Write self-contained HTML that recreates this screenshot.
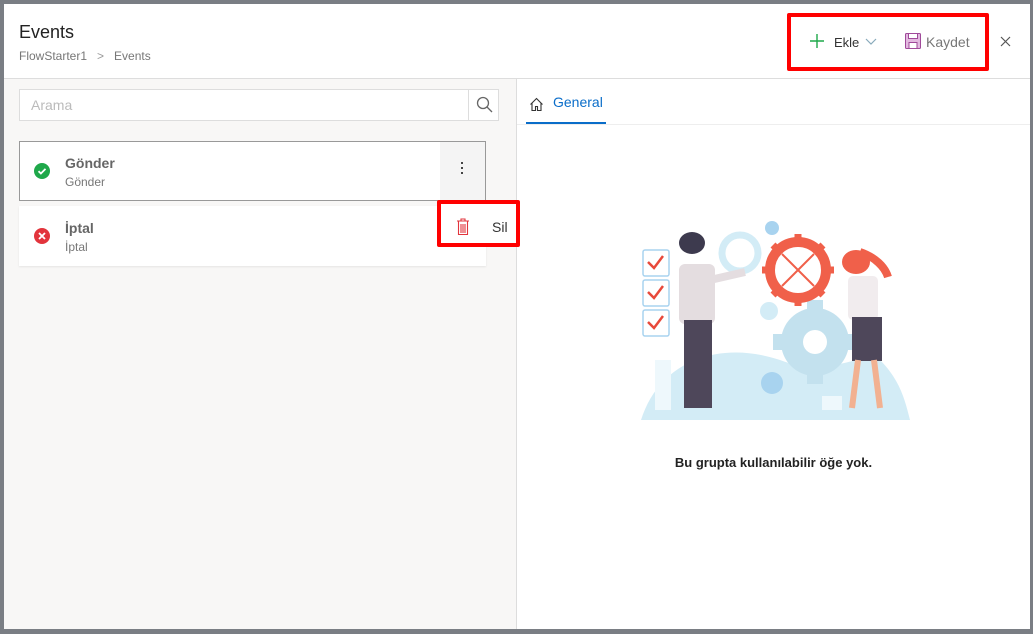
<!DOCTYPE html>
<html><head><meta charset="utf-8"><style>
body{margin:0;width:1033px;height:634px;background:#7a7e84;font-family:"Liberation Sans",sans-serif;overflow:hidden;position:relative}
.p{position:absolute;left:4px;top:4px;width:1026px;height:625px;background:#fff}
.a{position:absolute}
</style></head><body>
<div class="p">
<div class="a" style="left:15px;top:18px;font-size:18px;color:#222">Events</div>
<div class="a" style="left:15px;top:45px;font-size:12px;color:#777">FlowStarter1 &nbsp;&nbsp;<span style="color:#999">&gt;</span>&nbsp;&nbsp; Events</div>
<div class="a" style="left:0;top:74px;width:1026px;height:1px;background:#ddd"></div>
<div class="a" style="left:0;top:75px;width:512px;height:550px;background:#f8f7f6;border-right:1px solid #ddd"></div>
<!-- search -->
<div class="a" style="left:15px;top:85px;width:478px;height:30px;background:#fff;border:1px solid #ddd"></div>
<div class="a" style="left:464px;top:86px;width:1px;height:30px;background:#ddd"></div>
<div class="a" style="left:27px;top:93px;font-size:14px;color:#bbb">Arama</div>
<svg class="a" style="left:472px;top:92px" width="18" height="18"><circle cx="7" cy="7" r="5.5" fill="none" stroke="#666" stroke-width="1.3"/><line x1="11" y1="11" x2="16" y2="16" stroke="#666" stroke-width="1.3"/></svg>
<!-- item 1 -->
<div class="a" style="left:15px;top:137px;width:465px;height:58px;background:#fff;border:1px solid #999"></div>
<div class="a" style="left:436px;top:138px;width:45px;height:58px;background:#f4f4f4"></div>
<div class="a" style="left:457px;top:158px;width:2px;height:2px;background:#444;box-shadow:0 5px #444,0 10px #444"></div>
<svg class="a" style="left:30px;top:159px" width="16" height="16"><circle cx="8" cy="8" r="8" fill="#1fa84a"/><path d="M4.5 8.2l2.4 2.3 4.6-4.6" fill="none" stroke="#fff" stroke-width="1.8"/></svg>
<div class="a" style="left:61px;top:151px;font-size:14px;font-weight:bold;color:#666">Gönder</div>
<div class="a" style="left:61px;top:171px;font-size:12px;color:#777">Gönder</div>
<!-- item 2 -->
<div class="a" style="left:15px;top:202px;width:467px;height:60px;background:#fff;box-shadow:0 1px 2px rgba(0,0,0,.08)"></div>
<svg class="a" style="left:30px;top:224px" width="16" height="16"><circle cx="8" cy="8" r="8" fill="#e2343c"/><path d="M5 5l6 6M11 5l-6 6" stroke="#fff" stroke-width="1.8"/></svg>
<div class="a" style="left:61px;top:216px;font-size:14px;font-weight:bold;color:#666">İptal</div>
<div class="a" style="left:61px;top:236px;font-size:12px;color:#777">İptal</div>
<!-- Sil popup -->
<div class="a" style="left:433px;top:196px;width:83px;height:47px;box-sizing:border-box;border:4px solid #f00;background:#fff;border-radius:2px"></div>
<svg class="a" style="left:452px;top:214px" width="14" height="18"><path d="M1 3h12M5 3V1h4v2M2.5 3.5v13h9v-13M5 6v9M7 6v9M9 6v9" fill="none" stroke="#e2343c" stroke-width="1.1"/></svg>
<div class="a" style="left:488px;top:215px;font-size:14px;color:#333">Sil</div>
<!-- top right -->
<div class="a" style="left:783px;top:9px;width:202px;height:58px;box-sizing:border-box;border:4px solid #f00;border-radius:2px"></div>
<svg class="a" style="left:805px;top:29px" width="16" height="16"><path d="M8 1v14M1 8h14" stroke="#1fa84a" stroke-width="1.4"/></svg>
<div class="a" style="left:830px;top:31px;font-size:13px;color:#333">Ekle</div>
<svg class="a" style="left:861px;top:34px" width="12" height="8"><path d="M1 1l5 5 5-5" fill="none" stroke="#8ab" stroke-width="1.2"/></svg>
<svg class="a" style="left:901px;top:29px" width="16" height="16"><rect x="0.5" y="0.5" width="15" height="15" rx="1" fill="#e3b9e0" stroke="#a04a9a"/><rect x="3.5" y="0.5" width="9" height="5" fill="#fff" stroke="#a04a9a"/><rect x="4" y="9.5" width="8" height="6" fill="#fff" stroke="#a04a9a"/></svg>
<div class="a" style="left:922px;top:30px;font-size:14px;color:#777">Kaydet</div>
<svg class="a" style="left:996px;top:32px" width="11" height="11"><path d="M1 1l9 9M10 1l-9 9" stroke="#555" stroke-width="1.2"/></svg>
<!-- tab -->
<svg class="a" style="left:525px;top:93px" width="15" height="15"><path d="M1.5 7.5L7.5 1.5l6 6M3 6v7.5h3.5v-4h2v4H12V6" fill="none" stroke="#333" stroke-width="1.1"/></svg>
<div class="a" style="left:549px;top:90px;font-size:14px;color:#0a6dc9">General</div>
<div class="a" style="left:522px;top:118px;width:80px;height:2px;background:#0a6dc9"></div>
<div class="a" style="left:513px;top:120px;width:513px;height:1px;background:#eee"></div>
<!-- illustration -->
<svg class="a" style="left:616px;top:196px" width="310" height="230" viewBox="620 200 310 230">
<path d="M641 420 C660 360 720 340 780 360 C830 380 860 350 880 360 C900 380 905 400 910 420Z" fill="#d3ecf6"/>
<g fill="#c3e1ee"><circle cx="815" cy="342" r="34"/><rect x="807" y="300" width="16" height="84"/><rect x="773" y="334" width="84" height="16"/></g>
<circle cx="815" cy="342" r="12" fill="#fff"/>
<circle cx="798" cy="270" r="28" fill="none" stroke="#f0604a" stroke-width="10"/>
<g stroke="#f0604a" stroke-width="7"><path d="M798 234v10M798 296v10M762 270h10M824 270h10M773 245l7 7M816 288l7 7M773 295l7-7M816 252l7-7"/></g>
<path d="M782 254l32 32M814 254l-32 32" stroke="#f0604a" stroke-width="2"/>
<circle cx="740" cy="253" r="18" fill="none" stroke="#d3ecf6" stroke-width="7"/>
<circle cx="772" cy="228" r="7" fill="#a8d3ef"/><circle cx="772" cy="383" r="11" fill="#a8d3ef"/><circle cx="769" cy="311" r="9" fill="#d3ecf6"/>
<g fill="#fff" stroke="#a8d3ef" stroke-width="1.5"><rect x="643" y="250" width="26" height="26" rx="2"/><rect x="643" y="280" width="26" height="26" rx="2"/><rect x="643" y="310" width="26" height="26" rx="2"/></g>
<g fill="none" stroke="#e8493a" stroke-width="2.5"><path d="M648 262l6 6 9-12M648 292l6 6 9-12M648 322l6 6 9-12"/></g>
<rect x="655" y="360" width="16" height="50" fill="#eef8fc"/>
<ellipse cx="692" cy="243" rx="13" ry="11" fill="#3d3a4e"/>
<rect x="679" y="264" width="36" height="60" rx="6" fill="#e4dde0"/>
<path d="M710 280l35-8" stroke="#e4dde0" stroke-width="8"/>
<rect x="684" y="320" width="28" height="88" fill="#4e475a"/>
<ellipse cx="856" cy="262" rx="14" ry="12" fill="#f0604a"/>
<path d="M860 252c15 5 25 15 28 25" stroke="#f0604a" stroke-width="8" fill="none"/>
<rect x="848" y="276" width="30" height="44" rx="5" fill="#f1ecee"/>
<rect x="852" y="317" width="30" height="44" fill="#4e475a"/>
<path d="M858 360l-6 48M874 360l6 48" stroke="#f2b191" stroke-width="6"/>
<rect x="822" y="396" width="20" height="14" fill="#eef8fc"/>
</svg>
<div class="a" style="left:513px;top:451px;width:513px;text-align:center;font-size:13px;font-weight:bold;color:#222">Bu grupta kullanılabilir öğe yok.</div>
</div>
</body></html>
